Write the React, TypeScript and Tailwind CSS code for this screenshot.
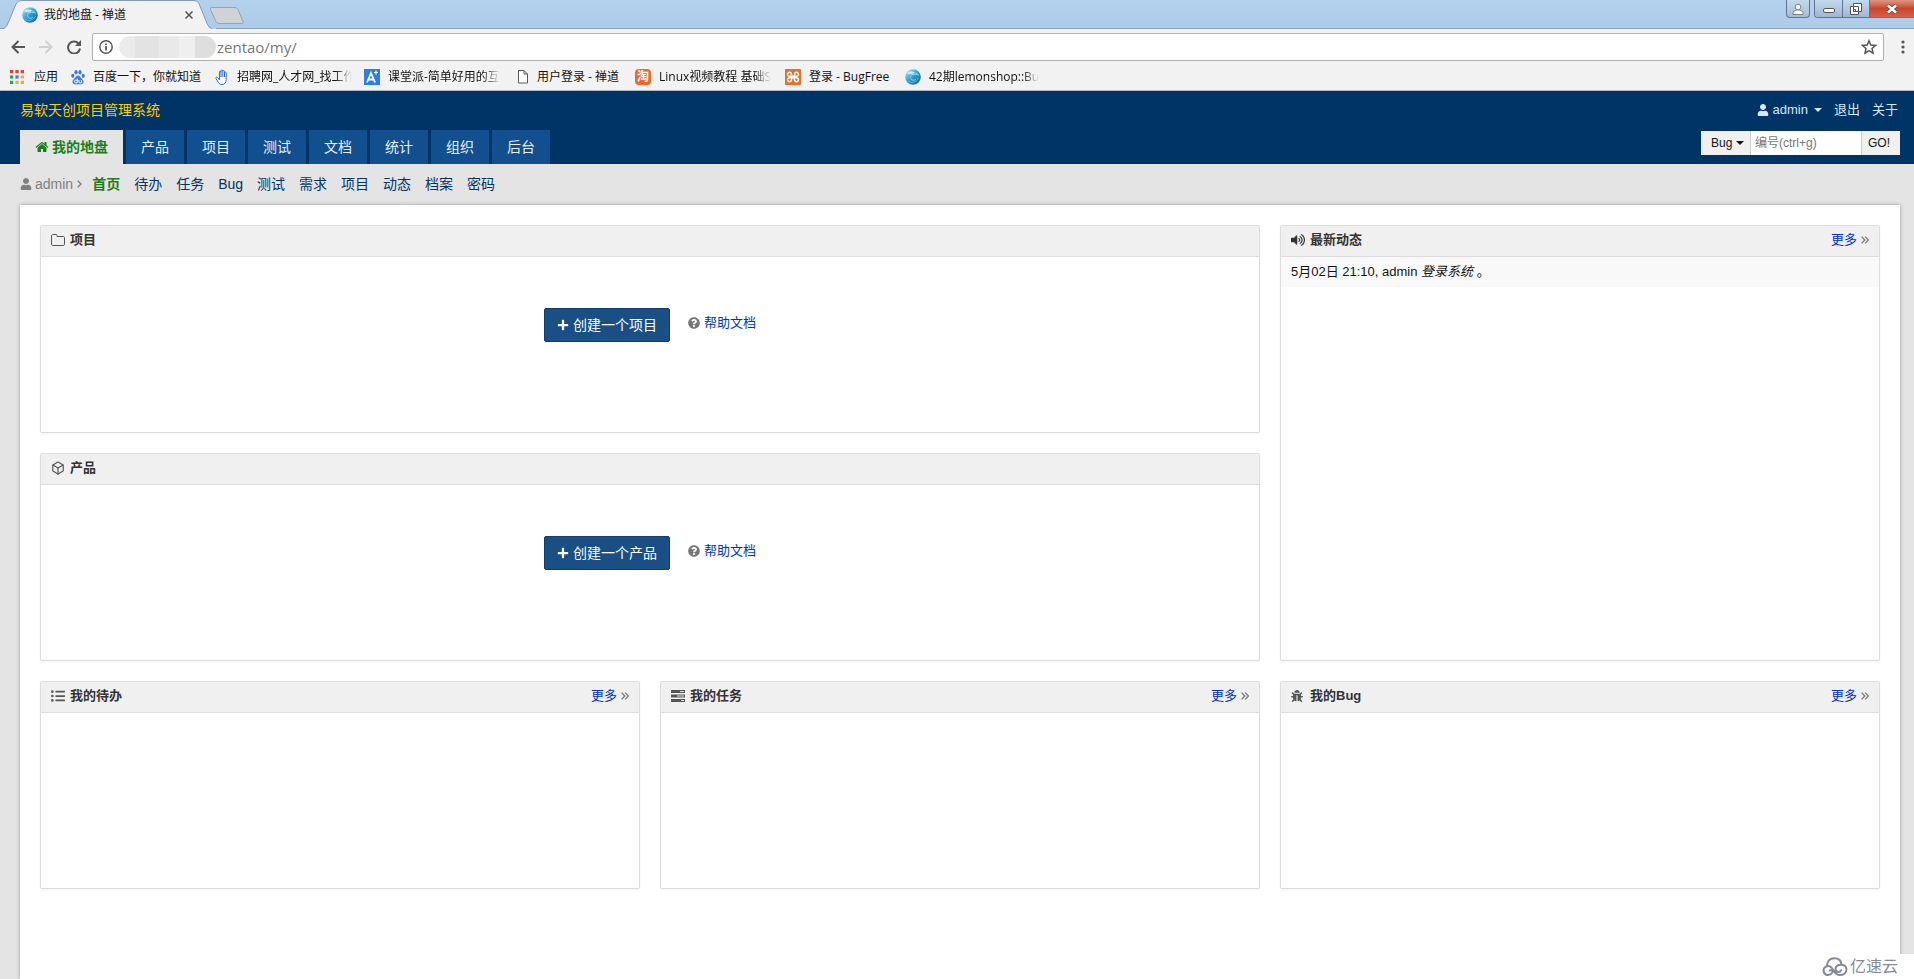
import React from "react";
import { FaUser, FaPlus, FaQuestionCircle, FaListUl, FaBug, FaVolumeUp } from "react-icons/fa";
import { FiBox } from "react-icons/fi";

const uiFont = "font-['Liberation_Sans','Noto_Sans_CJK_SC',sans-serif]";
const chromeFont = "font-['Open_Sans','Noto_Sans_CJK_SC',sans-serif]";

function Swirl() {
  return (
    <svg viewBox="0 0 16 16" className="size-4 shrink-0" aria-hidden="true">
      <defs>
        <linearGradient id="swirl" x1="0" y1="0" x2="1" y2="1">
          <stop offset="0" stopColor="#c4ecf7" />
          <stop offset="0.45" stopColor="#35a3d8" />
          <stop offset="1" stopColor="#0b5797" />
        </linearGradient>
      </defs>
      <circle cx="8" cy="8" r="7.8" fill="url(#swirl)" />
      <path d="M1.500 6c3-3.500 9-3.500 12 0-4-1.500-8-.5-8 2.500s4 3.500 5.500 1.500" fill="none" stroke="#8fd6f0" strokeWidth="1" />
      <path d="M3 12c3 2.500 8.500 1.500 10.500-3" fill="none" stroke="#5bb9e2" strokeWidth="1" />
      <ellipse cx="6" cy="3.800" rx="3.500" ry="1.600" fill="#e4f7fc" opacity=".7" />
    </svg>
  );
}

function HomeIcon() {
  return (
    <svg viewBox="0 0 1792 1792" className="size-3.5 shrink-0" fill="currentColor" aria-hidden="true">
      <path d="M1472 992v480q0 26-19 45t-45 19h-384v-384h-256v384h-384q-26 0-45-19t-19-45v-480q0-1 .5-3t.5-3l575-474 575 474q1 2 1 6zm223-69l-62 74q-8 9-21 11h-3q-13 0-21-7l-692-577-692 577q-12 8-24 7-13-2-21-11l-62-74q-8-10-7-23.5t11-21.5l719-599q32-26 76-26t76 26l244 204v-195q0-14 9-23t23-9h192q14 0 23 9t9 23v408l219 182q10 8 11 21.5t-7 23.5z" />
    </svg>
  );
}

function FolderIcon() {
  return (
    <svg viewBox="0 0 14 14" className="size-3.5" fill="none" stroke="currentColor" aria-hidden="true">
      <path d="M.5 3c0-.8.5-1.500 1.300-1.500H5c.7 0 1 .4 1 1v1h6.200c.8 0 1.300.5 1.300 1.200v6.500c0 .8-.5 1.300-1.300 1.300H1.800c-.8 0-1.300-.5-1.300-1.300z" />
    </svg>
  );
}

function TasksIcon() {
  return (
    <svg viewBox="0 0 14 12" className="h-3 w-3.5" aria-hidden="true">
      <path d="M0 0h14v3H0zM0 4.500h14v3H0zM0 9h14v3H0z" fill="#555" />
      <path d="M9 1h4v1H9zM6 5.500h7v1H6zM10 10h3v1h-3z" fill="#ddd" />
    </svg>
  );
}

function DoubleRight() {
  return (
    <svg viewBox="0 0 8 8" className="size-2" fill="none" stroke="#777" strokeWidth="1.300" aria-hidden="true">
      <path d="M.6.600 3.800 4 .6 7.400M4.200.600 7.400 4 4.200 7.400" />
    </svg>
  );
}

function Caret({ className = "" }: { className?: string }) {
  return (
    <svg viewBox="0 0 8 4" className={`${className} h-1 w-2`} fill="currentColor" aria-hidden="true">
      <path d="M0 0h8L4 4z" />
    </svg>
  );
}

function BookmarkGlyph({ kind }: { kind: string }) {
  if (kind === "apps")
    return (
      <svg viewBox="0 0 13 13" className="mr-0.5 size-3.5 shrink-0" aria-hidden="true">
        <path d="M0 0h3v3H0zM5 0h3v3H5zM10 0h3v3h-3z" fill="#dc4437" />
        <path d="M0 5h3v3H0z" fill="#2e9e5b" />
        <path d="M5 5h3v3H5z" fill="#3f7fe8" />
        <path d="M10 5h3v3h-3zM5 10h3v3H5zM10 10h3v3h-3z" fill="#efb02e" />
        <path d="M0 10h3v3H0z" fill="#2e9e5b" />
      </svg>
    );
  if (kind === "baidu")
    return (
      <svg viewBox="0 0 14 16" className="h-4 w-3.5 shrink-0" fill="#3a7be0" aria-hidden="true">
        <ellipse cx="1.800" cy="6.800" rx="1.600" ry="2.100" />
        <ellipse cx="5" cy="3.200" rx="1.600" ry="2.300" />
        <ellipse cx="9" cy="3.200" rx="1.600" ry="2.300" />
        <ellipse cx="12.200" cy="6.800" rx="1.600" ry="2.100" />
        <path d="M7 6.500c1.600 0 2.300 1.500 3.300 2.700s2.500 2 2.200 4c-.4 2.600-3 2.200-5.500 2.100-2.500.1-5.100.5-5.500-2.100-.3-2 1.200-2.800 2.200-4S5.400 6.500 7 6.500z" />
        <path d="M6.300 9.500v4.300H4.600c-1.600 0-1.600-2.600 0-2.600h1.700M8 11v2c0 .8.5 1 1 1h1.400v-3" fill="none" stroke="#fff" />
      </svg>
    );
  if (kind === "hand")
    return (
      <svg viewBox="0 0 14 16" className="h-4 w-3.5 shrink-0" fill="#fff" stroke="#2d6cd2" aria-hidden="true">
        <path d="M4.500 9V3c0-1.200 1.500-1.200 1.500 0v-1c0-1.500 1.800-1.500 1.800 0v.5c0-1.300 1.700-1.300 1.700 0V4c0-1.200 1.700-1.200 1.700 0v6.500c0 3-1.500 5-4.200 5-2.500 0-3.300-1.500-4.300-3.200L1 9.500c-.6-1.200.8-1.800 1.700-.8L4.500 11zM6 3v5M7.800 2.500V8M9.500 4v4" />
      </svg>
    );
  if (kind === "aplus")
    return (
      <svg viewBox="0 0 16 16" className="size-4 shrink-0" aria-hidden="true">
        <path d="M0 0h16v16H0z" fill="#2b7fe0" />
        <path d="M3 13.500 7 4l4 9.500M4.500 10.500h5" fill="none" stroke="#fff" strokeWidth="1.800" />
        <path d="M10 3.500h4M12 1.500v4" fill="none" stroke="#fff" strokeWidth="1.200" />
      </svg>
    );
  if (kind === "page")
    return (
      <svg viewBox="0 0 12 16" className="h-4 w-3 shrink-0" fill="#fff" stroke="#5a5a5a" aria-hidden="true">
        <path d="M1.500 1.500h5.500l3.500 3.500v9h-9zM7 1.500V5h3.500" />
      </svg>
    );
  if (kind === "tao")
    return (
      <span className="flex size-4 shrink-0 items-center justify-center rounded-sm bg-[#ee6a2c] text-xs leading-4 font-bold text-white">淘</span>
    );
  if (kind === "xampp")
    return (
      <svg viewBox="0 0 16 16" className="size-4 shrink-0" aria-hidden="true">
        <rect width="16" height="16" rx="1" fill="#e5702a" />
        <path d="M6.500 7.200H5A2 2 0 1 1 6.500 5.500v1.700h3V5.500A2 2 0 1 1 11 7.200c-1 .3-1 1.300 0 1.600a2 2 0 1 1-1.500 1.700V8.800h-3v1.700A2 2 0 1 1 5 8.800c1-.3 1-1.300 0-1.600" fill="none" stroke="#fff" strokeWidth="1.500" />
      </svg>
    );
  return <Swirl />;
}

const bookmarks = [
  { kind: "apps", text: "应用", box: "w-[61px]", fade: false },
  { kind: "baidu", text: "百度一下，你就知道", box: "w-[144px]", fade: false },
  { kind: "hand", text: "招聘网_人才网_找工作", box: "w-[149px]", fade: true },
  { kind: "aplus", text: "课堂派-简单好用的互", box: "w-[153px]", fade: true },
  { kind: "page", text: "用户登录 - 禅道", box: "w-[118px]", fade: false },
  { kind: "tao", text: "Linux视频教程 基础S", box: "w-[150px]", fade: true },
  { kind: "xampp", text: "登录 - BugFree", box: "w-[120px]", fade: false },
  { kind: "swirl", text: "42期lemonshop::Bu", box: "w-[150px]", fade: true },
];

function Browser() {
  return (
    <header className={`${chromeFont} bg-[#f2f2f2] text-[#111]`}>
      <div className="flex h-7 items-start bg-linear-to-b from-[#b3d1ed] to-[#aecbe8]">
        <div className="relative isolate flex h-[29px] w-[210px] shrink-0 items-center gap-1.5 pl-[22px]">
          <svg viewBox="0 0 216 29" preserveAspectRatio="none" className="absolute inset-0 -z-10 h-full w-[216px]" aria-hidden="true">
            <path d="M0 28.500h4Q7 27 9 21L16 4Q18 .5 21 .5h173q4 0 5 3l8 20q2 5 5 5h4V29H0z" fill="#f2f2f2" />
            <path d="M0 28.500h4Q7 27 9 21L16 4Q18 .5 21 .5h173q4 0 5 3l8 20q2 5 5 5" fill="none" stroke="#7f9cba" />
          </svg>
          <Swirl />
          <span className="text-xs">我的地盘 - 禅道</span>
          <button aria-label="关闭标签页" className="ml-auto mr-[17px]">
            <svg viewBox="0 0 8 8" className="size-2" stroke="#555" strokeWidth="1.500" aria-hidden="true"><path d="M.5.5l7 7M7.500.5l-7 7" /></svg>
          </button>
        </div>
        <button aria-label="新标签页" className="mt-[7px]">
          <svg viewBox="0 0 34 17" className="h-[17px] w-[34px]" aria-hidden="true">
            <path d="M2 .5h23q2 0 3 2l5 12q.5 2-1.500 2H9q-2 0-3-2L.5 2.500Q0 .5 2 .5z" fill="#d0d3d6" stroke="#8fa5bb" />
          </svg>
        </button>
        <div className="ml-auto flex h-[18px] gap-1">
          <button aria-label="用户" className="flex w-6 items-center justify-center rounded-b border border-t-0 border-[#5c7591] bg-linear-to-b from-[#c5d9ec] to-[#a5bdd5]">
            <svg viewBox="0 0 12 12" className="size-3" fill="#fff" stroke="#667" strokeWidth=".8" aria-hidden="true">
              <path d="M1 11.500v-1.800q0-1.700 2.500-2.200l1-.5h3l1 .5q2.500.5 2.500 2.200v1.800z" />
              <circle cx="6" cy="4" r="2.800" />
            </svg>
          </button>
          <div className="flex w-[100px] overflow-hidden rounded-bl border border-t-0 border-r-0 border-[#5c7591]">
            <button aria-label="最小化" className="flex w-7 items-center justify-center border-r border-[#5c7591] bg-linear-to-b from-[#c5d9ec] to-[#9fb8d1]">
              <span className="mt-1 h-[5px] w-3 rounded-xs border border-[#556] bg-white" />
            </button>
            <button aria-label="还原" className="flex w-[27px] items-center justify-center border-r border-[#5c7591] bg-linear-to-b from-[#c5d9ec] to-[#9fb8d1]">
              <svg viewBox="0 0 12 12" className="size-3" fill="#fff" stroke="#556" aria-hidden="true"><path d="M3.500.5h8v8h-8zM.5 3.500h8v8h-8zM3.500 6.500h2v2h-2z" /></svg>
            </button>
            <button aria-label="关闭" className="flex flex-1 items-center justify-center bg-linear-to-b from-[#dd9483] via-[#c9452b] to-[#d4614a]">
              <svg viewBox="0 0 12 10" className="h-2.5 w-3" aria-hidden="true"><path d="M2 1.500l8 7M10 1.500l-8 7" stroke="#544" strokeWidth="4" /><path d="M2 1.500l8 7M10 1.500l-8 7" stroke="#fff" strokeWidth="2.500" /></svg>
            </button>
          </div>
        </div>
      </div>
      <div className="flex h-[33px] items-end border-t border-[#8ba5c0]">
        <div className="flex h-7 w-[92px] shrink-0 items-center gap-3.5 pl-[11px] text-[#555]">
          <button aria-label="后退"><svg viewBox="0 0 14 14" className="size-3.5" fill="none" stroke="currentColor" strokeWidth="2" aria-hidden="true"><path d="M14 7H1.500M7.500 1 1.500 7l6 6" /></svg></button>
          <button aria-label="前进" className="text-[#d0d0d0]"><svg viewBox="0 0 14 14" className="size-3.5" fill="none" stroke="currentColor" strokeWidth="2" aria-hidden="true"><path d="M0 7h12.500M6.500 1l6 6-6 6" /></svg></button>
          <button aria-label="刷新"><svg viewBox="0 0 14 14" className="size-3.5" aria-hidden="true"><path d="M11.500 3.500A6 6 0 1 0 13 8.500" fill="none" stroke="currentColor" strokeWidth="2" /><path d="M14 0v6H8z" fill="currentColor" /></svg></button>
        </div>
        <div className="flex h-7 flex-1 items-center rounded-xs border border-[#b0b0b0] bg-white pl-1.5">
          <svg viewBox="0 0 14 14" className="size-3.5" fill="none" stroke="#555" strokeWidth="1.400" aria-hidden="true"><circle cx="7" cy="7" r="6.200" /><path d="M7 6v4.500M7 3.400v1.500" strokeWidth="1.800" /></svg>
          <span className="ml-1.5 flex h-[22px] w-[97px] overflow-hidden rounded-xl" aria-hidden="true">
            <span className="w-4 bg-[#ebebeb]" /><span className="w-6 bg-[#e3e3e3]" /><span className="w-5 bg-[#e9e9e9]" /><span className="w-4 bg-[#efefef]" /><span className="flex-1 bg-[#dedede]" />
          </span>
          <input aria-label="地址" defaultValue="zentao/my/" className="min-w-0 flex-1 bg-transparent pl-px text-[15px] leading-6 text-[#777] outline-none" />
          <button aria-label="收藏" className="mr-1.5">
            <svg viewBox="0 0 16 16" className="size-4" fill="none" stroke="#555" strokeWidth="1.500" aria-hidden="true"><path d="M8 1.800l1.800 4.300 4.700.4-3.500 3 1 4.600L8 11.700l-4 2.400 1-4.600-3.500-3 4.700-.4z" /></svg>
          </button>
        </div>
        <button aria-label="菜单" className="flex h-7 w-[30px] items-center justify-center pl-2">
          <svg viewBox="0 0 4 14" className="h-3.5 w-1" fill="#555" aria-hidden="true"><circle cx="2" cy="2" r="1.600" /><circle cx="2" cy="7" r="1.600" /><circle cx="2" cy="12" r="1.600" /></svg>
        </button>
      </div>
      <nav className="flex h-[30px] items-center border-b border-[#a9b9cb] pt-0.5 pl-2.5 text-xs">
        {bookmarks.map((b) => (
          <a key={b.text} href="#" className={`${b.box} flex shrink-0 items-center gap-2`}>
            <BookmarkGlyph kind={b.kind} />
            <span className={b.fade ? "mr-3 overflow-hidden whitespace-nowrap mask-r-from-85%" : "whitespace-nowrap"}>{b.text}</span>
          </a>
        ))}
      </nav>
    </header>
  );
}

function More() {
  return (
    <a href="#" className="ml-auto flex items-center gap-1 font-normal text-[#03c]">更多 <DoubleRight /></a>
  );
}

type PanelProps = { title: string; icon: React.ReactNode; more?: boolean; className?: string; children?: React.ReactNode };

function Panel({ title, icon, more, className = "", children }: PanelProps) {
  return (
    <section className={`${className} min-h-52 rounded-xs border border-[#ddd] bg-white shadow-xs`}>
      <h2 className="flex h-[31px] items-center gap-[3px] border-b border-[#ddd] bg-[#f0f0f0] px-2.5 pb-0.5 text-[13px] leading-5 font-bold text-[#333]">
        <span className="flex w-4 shrink-0 items-center text-[#555]">{icon}</span>
        {title}
        {more && <More />}
      </h2>
      {children}
    </section>
  );
}

function Starter({ label }: { label: string }) {
  return (
    <div className="flex items-start justify-center gap-[18px] pt-[51px]">
      <button className="flex h-[34px] items-center gap-1 rounded-xs border border-[#0f3d6c] bg-[#1a4f85] px-3 text-sm text-white">
        <FaPlus className="size-3" aria-hidden="true" />
        {label}
      </button>
      <a href="#" className="flex items-center gap-1 text-[13px] leading-[30px] text-[#03c]">
        <FaQuestionCircle className="size-3 text-[#777]" aria-hidden="true" />
        帮助文档
      </a>
    </div>
  );
}

const modules = ["产品", "项目", "测试", "文档", "统计", "组织", "后台"];
const subItems = ["待办", "任务", "Bug", "测试", "需求", "项目", "动态", "档案", "密码"];

export default function App() {
  return (
    <div className={`${uiFont} relative flex min-h-screen flex-col bg-[#e4e4e4] text-[13px] text-[#141414]`}>
      <Browser />
      <div className="bg-[#036] pr-3.5 pl-5">
        <div className="flex h-[39px] items-center justify-between pb-0.5">
          <h1 className="text-sm text-[#fc0]">易软天创项目管理系统</h1>
          <div className="flex items-center gap-3 pr-0.5 text-[#d5e8fa]">
            <button className="flex items-center gap-1">
              <FaUser className="size-3" aria-hidden="true" />
              admin
              <Caret className="ml-0.5" />
            </button>
            <a href="#">退出</a>
            <a href="#">关于</a>
          </div>
        </div>
        <div className="flex h-[34px] items-start justify-between">
          <nav className="flex gap-[3px] text-sm">
            <a href="#" className="flex h-[34px] w-[103px] items-center justify-center gap-[3px] bg-[#e4e4e4] font-bold text-[#1a7f1a]"><HomeIcon />我的地盘</a>
            {modules.map((m) => (
              <a key={m} href="#" className="flex h-[34px] w-[58px] items-center justify-center bg-[#114f8e] text-[#e3effb]">{m}</a>
            ))}
          </nav>
          <form className="mt-px flex h-6 text-xs">
            <label className="relative flex w-[49px] items-center bg-[#f0f0f0] text-[#141414]">
              <select aria-label="搜索类型" className="size-full appearance-none pl-2.5 outline-none"><option>Bug</option></select>
              <Caret className="pointer-events-none absolute right-1.5" />
            </label>
            <input aria-label="编号" placeholder="编号(ctrl+g)" className="w-[112px] border-x border-[#ccc] bg-white px-1 outline-none placeholder:text-[#777]" />
            <button type="button" className="w-[38px] bg-[#f0f0f0] pr-1">GO!</button>
          </form>
        </div>
      </div>
      <nav className="flex h-[41px] items-center gap-3.5 px-5 pb-0.5 text-sm text-[#036]">
        <span className="-mr-1 flex items-center gap-[3px] text-[#808080]">
          <FaUser className="size-3" aria-hidden="true" />
          admin
          <svg viewBox="0 0 5 8" className="ml-px h-2 w-[5px]" fill="none" stroke="currentColor" strokeWidth="1.400" aria-hidden="true"><path d="M.7.7 4 4 .7 7.300" /></svg>
        </span>
        <a href="#" className="font-bold text-[#1a7f1a]">首页</a>
        {subItems.map((s) => <a key={s} href="#">{s}</a>)}
      </nav>
      <main className="mr-3.5 ml-5 grid flex-1 auto-rows-min grid-cols-3 gap-5 bg-white p-5 shadow-[0_0_4px_rgba(0,0,0,0.3)]">
        <Panel title="项目" icon={<FolderIcon />} className="col-span-2"><Starter label="创建一个项目" /></Panel>
        <Panel title="最新动态" icon={<FaVolumeUp className="size-3.5 text-[#333]" />} more className="row-span-2">
          <p className="bg-[#f9f9f9] px-2.5 text-[13px] leading-[30px]">5月02日 21:10, admin <em>登录系统</em> 。</p>
        </Panel>
        <Panel title="产品" icon={<FiBox className="size-3.5" />} className="col-span-2"><Starter label="创建一个产品" /></Panel>
        <Panel title="我的待办" icon={<FaListUl className="size-3.5" />} more />
        <Panel title="我的任务" icon={<TasksIcon />} more />
        <Panel title="我的Bug" icon={<FaBug className="size-3" />} more />
      </main>
      <div className="absolute right-0 bottom-0 flex h-[25px] items-center gap-0.5 bg-white pr-4 pl-2 text-base leading-6 text-[#858b9c]">
        <svg viewBox="0 0 26 20" className="h-5 w-[26px]" fill="none" stroke="currentColor" strokeWidth="2" strokeLinecap="round" aria-hidden="true">
          <path d="M5 9C5 4 8 1.200 12.500 1.200c4 0 6.500 2.300 7 6" />
          <path d="M8 13.500c1.500-1.500 3.500.5 2 2.500-1.500 2.500-6.500 3-8-.5C.5 12 3 9 6.500 9c5 0 5 9 11 9 4 0 7-2 7-5.200 0-3.300-2.500-5-5.500-5-3.500 0-5.500 2-5.500 4.500 0 3 4.500 3.500 5.500 1" />
        </svg>
        亿速云
      </div>
    </div>
  );
}
